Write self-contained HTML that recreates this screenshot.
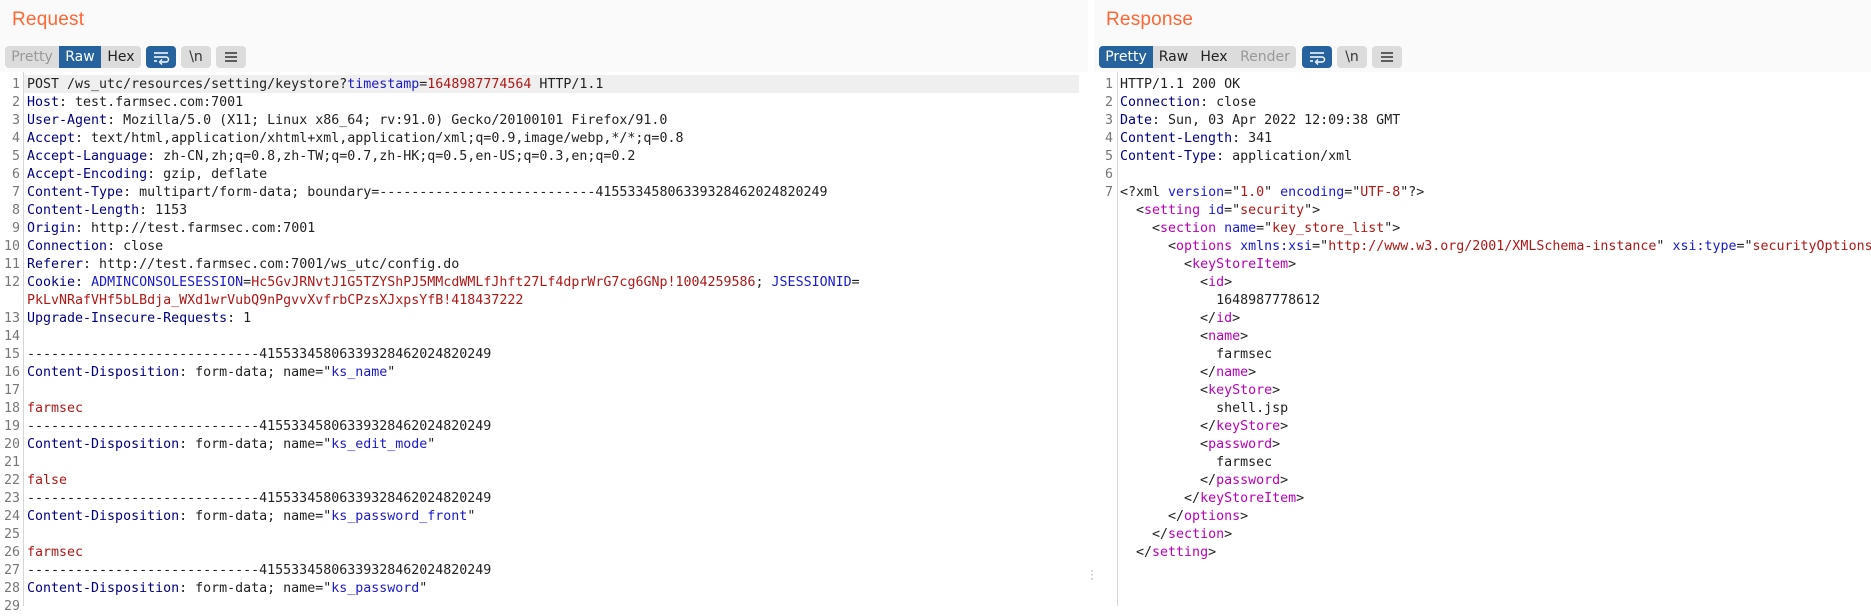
<!DOCTYPE html>
<html><head><meta charset="utf-8"><style>
*{margin:0;padding:0;box-sizing:border-box}
body{width:1871px;height:606px;background:#fff;position:relative;overflow:hidden;font-family:"DejaVu Sans Mono","Liberation Mono",monospace}
.hdr{position:absolute;top:0;height:72px;background:#fafafa}
.title{position:absolute;top:9px;font:500 19px "Liberation Sans",sans-serif;color:#ff6633;letter-spacing:0.2px}
.tb{position:absolute;top:46px;height:22px;font:14px "DejaVu Sans","Liberation Sans",sans-serif;line-height:22px}
.grp{position:absolute;top:0;height:22px;background:#dcdcdc;border-radius:4px;overflow:hidden;display:flex}
.grp span{display:block;height:22px;text-align:center;color:#222}
.grp span.on{background:#25629e;color:#fff}
.grp span.dis{color:#999}
.ib{position:absolute;top:0;width:30px;height:22px;border-radius:4px;background:#dcdcdc;color:#333;text-align:center}
.ib.on{background:#25629e}
.code{position:absolute;top:76px;font-size:13.3px;line-height:18px;color:#222;white-space:pre}
.code div{height:18px}
.gut{position:absolute;top:60px;bottom:0;border-left:1px solid #d6d6d6}
.nums{position:absolute;top:76px;font-size:13.3px;line-height:18px;color:#777;text-align:right;white-space:pre}
.h{color:#000080}.p{color:#1a1ad0}.v{color:#b01818}.t{color:#bb00bb}.a{color:#1a1ad0}
</style></head><body>
<div class="hdr" style="left:0;width:1088px"></div>
<div class="hdr" style="left:1094px;width:777px;background:#fafafa"></div>
<div class="title" style="left:12px">Request</div>
<div class="title" style="left:1106px">Response</div>

<div class="tb" style="left:5px">
 <div class="grp" style="left:0;width:136px"><span class="dis" style="width:54px">Pretty</span><span class="on" style="width:42px">Raw</span><span style="width:40px">Hex</span></div>
 <div class="ib on" style="left:141px"><svg width="30" height="22"><path d="M8 7h14M8 11h12a2.5 2.5 0 0 1 0 5h-5M8 15h3" stroke="#fff" stroke-width="1.5" fill="none"/><path d="M16 13.5l-2.5 2.5 2.5 2.5" stroke="#fff" stroke-width="1.3" fill="none"/></svg></div>
 <div class="ib" style="left:176px">\n</div>
 <div class="ib" style="left:211px"><svg width="30" height="22"><path d="M9 7h12M9 11h12M9 15h12" stroke="#333" stroke-width="1.5"/></svg></div>
</div>
<div class="tb" style="left:1099px">
 <div class="grp" style="left:0;width:197px"><span class="on" style="width:54px">Pretty</span><span style="width:41px">Raw</span><span style="width:40px">Hex</span><span class="dis" style="width:62px">Render</span></div>
 <div class="ib on" style="left:203px"><svg width="30" height="22"><path d="M8 7h14M8 11h12a2.5 2.5 0 0 1 0 5h-5M8 15h3" stroke="#fff" stroke-width="1.5" fill="none"/><path d="M16 13.5l-2.5 2.5 2.5 2.5" stroke="#fff" stroke-width="1.3" fill="none"/></svg></div>
 <div class="ib" style="left:238px">\n</div>
 <div class="ib" style="left:273px"><svg width="30" height="22"><path d="M9 7h12M9 11h12M9 15h12" stroke="#333" stroke-width="1.5"/></svg></div>
</div>

<div style="position:absolute;left:23px;top:75px;width:1056px;height:18px;background:#efefef"></div>
<div class="gut" style="left:23px;top:72px"></div>
<div class="gut" style="left:1117px;top:72px"></div>
<div style="position:absolute;left:1089px;top:570px;color:#aaa;font-size:10px;line-height:4px">·<br>·<br>·</div>

<div class="nums" style="left:0;width:20px">1
2
3
4
5
6
7
8
9
10
11
12

13
14
15
16
17
18
19
20
21
22
23
24
25
26
27
28
29</div>
<div class="code" style="left:27px"><div>POST /ws_utc/resources/setting/keystore?<span class="p">timestamp</span>=<span class="v">1648987774564</span> HTTP/1.1</div><div><span class="h">Host</span>: test.farmsec.com:7001</div><div><span class="h">User-Agent</span>: Mozilla/5.0 (X11; Linux x86_64; rv:91.0) Gecko/20100101 Firefox/91.0</div><div><span class="h">Accept</span>: text/html,application/xhtml+xml,application/xml;q=0.9,image/webp,*/*;q=0.8</div><div><span class="h">Accept-Language</span>: zh-CN,zh;q=0.8,zh-TW;q=0.7,zh-HK;q=0.5,en-US;q=0.3,en;q=0.2</div><div><span class="h">Accept-Encoding</span>: gzip, deflate</div><div><span class="h">Content-Type</span>: multipart/form-data; boundary=---------------------------41553345806339328462024820249</div><div><span class="h">Content-Length</span>: 1153</div><div><span class="h">Origin</span>: http://test.farmsec.com:7001</div><div><span class="h">Connection</span>: close</div><div><span class="h">Referer</span>: http://test.farmsec.com:7001/ws_utc/config.do</div><div><span class="h">Cookie</span>: <span class="p">ADMINCONSOLESESSION</span>=<span class="v">Hc5GvJRNvtJ1G5TZYShPJ5MMcdWMLfJhft27Lf4dprWrG7cg6GNp!1004259586</span>; <span class="p">JSESSIONID</span>=</div><div><span class="v">PkLvNRafVHf5bLBdja_WXd1wrVubQ9nPgvvXvfrbCPzsXJxpsYfB!418437222</span></div><div><span class="h">Upgrade-Insecure-Requests</span>: 1</div><div></div><div>-----------------------------41553345806339328462024820249</div><div><span class="h">Content-Disposition</span>: form-data; name="<span class="p">ks_name</span>"</div><div></div><div><span class="v">farmsec</span></div><div>-----------------------------41553345806339328462024820249</div><div><span class="h">Content-Disposition</span>: form-data; name="<span class="p">ks_edit_mode</span>"</div><div></div><div><span class="v">false</span></div><div>-----------------------------41553345806339328462024820249</div><div><span class="h">Content-Disposition</span>: form-data; name="<span class="p">ks_password_front</span>"</div><div></div><div><span class="v">farmsec</span></div><div>-----------------------------41553345806339328462024820249</div><div><span class="h">Content-Disposition</span>: form-data; name="<span class="p">ks_password</span>"</div><div></div></div>

<div class="nums" style="left:1096px;width:17px">1
2
3
4
5
6
7</div>
<div class="code" style="left:1120px"><div>HTTP/1.1 200 OK</div><div><span class="h">Connection</span>: close</div><div><span class="h">Date</span>: Sun, 03 Apr 2022 12:09:38 GMT</div><div><span class="h">Content-Length</span>: 341</div><div><span class="h">Content-Type</span>: application/xml</div><div></div><div>&lt;?xml <span class="a">version</span>="<span class="v">1.0</span>" <span class="a">encoding</span>="<span class="v">UTF-8</span>"?&gt;</div><div>  &lt;<span class="t">setting</span> <span class="a">id</span>="<span class="v">security</span>"&gt;</div><div>    &lt;<span class="t">section</span> <span class="a">name</span>="<span class="v">key_store_list</span>"&gt;</div><div>      &lt;<span class="t">options</span> <span class="a">xmlns:xsi</span>="<span class="v">http://www.w3.org/2001/XMLSchema-instance</span>" <span class="a">xsi:type</span>="<span class="v">securityOptions</span></div><div>        &lt;<span class="t">keyStoreItem</span>&gt;</div><div>          &lt;<span class="t">id</span>&gt;</div><div>            1648987778612</div><div>          &lt;/<span class="t">id</span>&gt;</div><div>          &lt;<span class="t">name</span>&gt;</div><div>            farmsec</div><div>          &lt;/<span class="t">name</span>&gt;</div><div>          &lt;<span class="t">keyStore</span>&gt;</div><div>            shell.jsp</div><div>          &lt;/<span class="t">keyStore</span>&gt;</div><div>          &lt;<span class="t">password</span>&gt;</div><div>            farmsec</div><div>          &lt;/<span class="t">password</span>&gt;</div><div>        &lt;/<span class="t">keyStoreItem</span>&gt;</div><div>      &lt;/<span class="t">options</span>&gt;</div><div>    &lt;/<span class="t">section</span>&gt;</div><div>  &lt;/<span class="t">setting</span>&gt;</div></div>
</body></html>
